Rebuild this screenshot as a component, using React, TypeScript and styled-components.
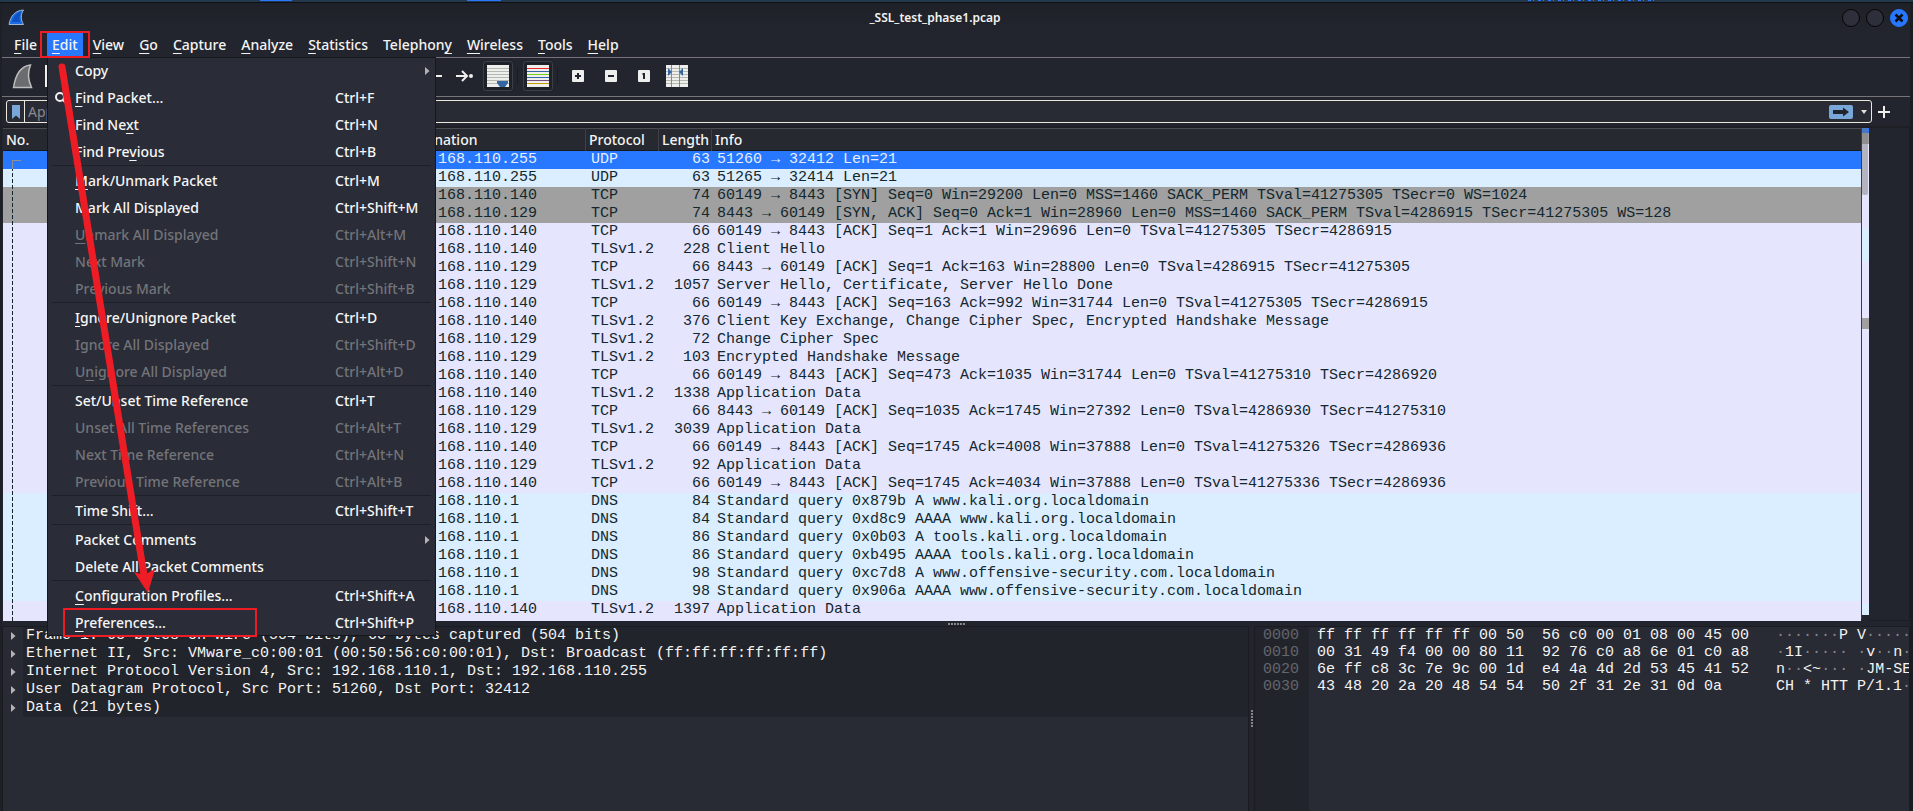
import React from 'react';
import styled, { createGlobalStyle, css } from 'styled-components';

const ui = '"Noto Sans", "Open Sans", sans-serif';
const mono = '"Liberation Mono", "DejaVu Sans Mono", monospace';

const GlobalStyle = createGlobalStyle`
  *, *::before, *::after { box-sizing: border-box; }
  body {
    margin: 0;
    background: #23252e;
    color: #f4f4f4;
    font: 500 14px/22px ${ui};
    overflow: hidden;
  }
  button {
    border: 0;
    padding: 0;
    background: none;
    color: inherit;
    font: inherit;
  }
`;

const Desktop = styled.div`
  display: flex;
  flex-direction: column;
  height: 100vh;
`;

const DesktopStrip = styled.div`
  position: relative;
  flex: none;
  height: 3px;
  background: #24394b;
  border-bottom: 1px solid #0f1015;
`;

const StripMark = styled.i<{ $left: string; $width: number }>`
  position: absolute;
  top: 0;
  left: ${(p) => p.$left};
  width: ${(p) => p.$width}px;
  height: 1px;
  background: #2777ff;
`;

const StripText = styled(StripMark)`
  background: repeating-linear-gradient(90deg, #2777ff 0 3px, transparent 3px 5px, #2777ff 5px 6px, transparent 6px 10px);
`;

const Window = styled.div`
  flex: 1;
  min-height: 0;
  display: flex;
  flex-direction: column;
  border-left: 2px solid #1e2027;
  border-right: 3px solid #1a1c22;
  background: #23252e;
`;

const TitleBar = styled.header`
  flex: none;
  display: flex;
  align-items: center;
  height: 29px;
  padding: 0 2px 0 6px;
  background: linear-gradient(#1f2128, #23252e);
`;

const Title = styled.h1`
  flex: 1;
  margin: 0;
  padding-left: 3px;
  text-align: center;
  font-size: 12px;
  font-weight: 600;
  line-height: 18px;
`;

const WindowButtons = styled.div`
  display: flex;
  gap: 6px;
`;

const WindowButton = styled.button<{ $close?: boolean }>`
  display: grid;
  place-items: center;
  width: 18px;
  height: 18px;
  border-radius: 50%;
  border: 1px solid ${(p) => (p.$close ? '#2777ff' : '#050506')};
  background: ${(p) => (p.$close ? '#2777ff' : '#2d303a')};
`;

const MenuBar = styled.nav`
  flex: none;
  display: flex;
  align-items: center;
  gap: 5px;
  height: 26px;
  padding-left: 7px;
  border-bottom: 1px solid #77737b;
`;

const MenuSlot = styled.div`
  position: relative;
`;

const MenuTitle = styled.button<{ $open?: boolean }>`
  display: block;
  height: 23px;
  padding: 0 5px;
  line-height: 23px;
  background: ${(p) => (p.$open ? '#2777ff' : 'transparent')};
`;

const Mnemonic = styled.span`
  text-decoration: underline;
  text-decoration-thickness: 1px;
  text-underline-offset: 3px;
`;

const EditFrame = styled.span`
  position: absolute;
  z-index: 4;
  inset: -2px -7px;
  border: 2px solid #ee1c25;
  pointer-events: none;
`;

const Dropdown = styled.div`
  position: absolute;
  z-index: 3;
  top: 24px;
  left: 0;
  width: 389px;
  background: #2a2c37;
  box-shadow: inset 0 0 0 1px #15171d;
`;

const MenuGroup = styled.div`
  & + &::before {
    content: '';
    display: block;
    height: 2px;
    margin: 0 5px;
    border-top: 1px solid #1e2028;
  }
`;

const MenuRow = styled.button<{ $off?: boolean }>`
  position: relative;
  display: grid;
  grid-template-columns: 28px 260px 1fr 10px;
  align-items: center;
  width: 100%;
  height: 27px;
  padding-right: 1px;
  text-align: left;
  color: ${(p) => (p.$off ? '#737479' : '#f6f6f6')};
`;

const RowIcon = styled.span`
  display: flex;
  padding-left: 8px;
`;

const Shortcut = styled.kbd`
  font: inherit;
`;

const PreferencesFrame = styled.span`
  position: absolute;
  top: -1px;
  left: 16px;
  width: 194px;
  height: 29px;
  border: 2px solid #ee1c25;
`;

const PointerArrow = styled.svg`
  position: absolute;
  top: 0;
  left: 0;
  pointer-events: none;
`;

const Toolbar = styled.div`
  flex: none;
  display: flex;
  align-items: center;
  height: 39px;
  padding: 0 0 2px 4px;
  border-bottom: 1px solid #77757a;
`;

const ToolButton = styled.button<{ $pressed?: boolean }>`
  flex: none;
  display: grid;
  place-items: center;
  width: ${(p) => (p.$pressed ? 30 : 33)}px;
  height: 30px;
  ${(p) =>
    p.$pressed &&
    css`
      border: 1px solid #3c3f46;
      border-radius: 3px;
      background: #1f2128;
    `}
`;

const ToolGap = styled.span<{ $size: number }>`
  flex: none;
  width: ${(p) => p.$size}px;
`;

const ToolDivider = styled.span`
  flex: none;
  width: 1px;
  height: 18px;
  margin: 0 5px 0 4px;
  background: #1b1d23;
  &:last-of-type {
    margin: 0 3px 0 4px;
  }
`;

const FilterBar = styled.form`
  flex: none;
  display: flex;
  align-items: center;
  height: 31px;
  padding: 0 19px 0 4px;
  gap: 6px;
  border-bottom: 2px solid #1d1f25;
`;

const FilterBox = styled.div`
  flex: 1;
  display: flex;
  align-items: center;
  height: 23px;
  border: 1px solid #ece8dd;
  border-radius: 3px;
  background: #282a34;
`;

const BookmarkButton = styled.button`
  display: grid;
  place-items: center;
  width: 18px;
  height: 21px;
  border-right: 1px solid #ece8dd;
`;

const FilterInput = styled.input`
  flex: 1;
  min-width: 0;
  height: 21px;
  padding: 0 3px;
  border: 0;
  background: none;
  color: #f4f4f4;
  font: 400 14px/21px ${ui};
  &::placeholder {
    color: #8a8b8f;
    opacity: 1;
  }
`;

const ApplyButton = styled.button`
  display: grid;
  place-items: center;
  width: 24px;
  height: 14px;
  margin-right: 8px;
  border-radius: 2px;
  background: #7aa7d9;
`;

const HistoryButton = styled.button`
  display: grid;
  place-items: center;
  width: 6px;
  height: 14px;
  margin-right: 4px;
`;

const AddButton = styled.button`
  display: grid;
  width: 13px;
`;

const ListPane = styled.section`
  flex: none;
  display: flex;
  padding-left: 1px;
`;

const TableWrap = styled.div`
  position: relative;
  flex: 1;
  min-width: 0;
  padding-bottom: 2px;
  background: #e5e5fe;
`;

const PacketTable = styled.table`
  width: 100%;
  table-layout: fixed;
  border-collapse: separate;
  border-spacing: 0;
  font: 400 15px/18px ${mono};
`;

const Col = styled.col<{ $w?: number }>`
  width: ${(p) => (p.$w ? `${p.$w}px` : 'auto')};
`;

const HeadCell = styled.th`
  height: 23px;
  padding: 0 0 0 3px;
  border-right: 1px solid #3d4047;
  background: linear-gradient(#4a4c52 0 1px, #262930 1px 22px, #17191e 22px);
  text-align: left;
  font: 500 14px/22px ${ui};
  &:last-child {
    border-right: 0;
  }
`;

type Tone = 'sel' | 'udp' | 'syn' | 'tcp';
const tones: Record<Tone, string> = { sel: '#2777ff', udp: '#daeeff', syn: '#a0a0a0', tcp: '#e5e5fe' };

const PacketRow = styled.tr<{ $tone: Tone }>`
  background: ${(p) => tones[p.$tone]};
  color: ${(p) => (p.$tone === 'sel' ? '#e6eefe' : '#12272e')};
`;

const Cell = styled.td<{ $right?: boolean }>`
  height: 18px;
  padding: 0 2px 0 5px;
  white-space: pre;
  overflow: hidden;
  text-align: ${(p) => (p.$right ? 'right' : 'left')};
`;

const StreamLine = styled.span`
  position: absolute;
  top: 32px;
  bottom: 0;
  left: 9px;
  width: 9px;
  border-top: 1px solid #8f9093;
  &::before {
    content: '';
    position: absolute;
    top: 0;
    bottom: 0;
    left: 0;
    width: 1px;
    background: linear-gradient(#8f9093 0 8px, transparent 8px),
      repeating-linear-gradient(#12272e 0 4px, transparent 4px 6px);
  }
`;

const MiniMap = styled.div`
  position: relative;
  flex: none;
  width: 8px;
  margin-bottom: 2px;
  border-left: 1px solid #3b3d44;
  background: linear-gradient(
    #2777ff 0 5px,
    #a0a0a0 5px 16px,
    #e5e5fe 16px 100px,
    #daeeff 100px 134px,
    #e5e5fe 134px 190px,
    #a0a0a0 190px 201px,
    #e5e5fe 201px 476px,
    #daeeff 476px 487px,
    #23252e 487px
  );
`;

const MiniThumb = styled.span`
  position: absolute;
  top: 0;
  left: 0;
  width: 6px;
  height: 67px;
  border-radius: 0 0 2px 2px;
  background: rgba(120, 120, 120, 0.45);
`;

const ListMargin = styled.div`
  flex: none;
  width: 41px;
  border-right: 1px solid #1c1e24;
  border-bottom: 1px solid #1c1e24;
`;

const Splitter = styled.div<{ $vertical?: boolean }>`
  flex: none;
  display: grid;
  place-items: center;
  height: ${(p) => (p.$vertical ? 'auto' : '5px')};
  &::after {
    content: '';
    width: ${(p) => (p.$vertical ? 2 : 17)}px;
    height: ${(p) => (p.$vertical ? 17 : 2)}px;
    background: repeating-linear-gradient(
      ${(p) => (p.$vertical ? '180deg' : '90deg')},
      #85868a 0 2px,
      transparent 2px 3px
    );
  }
`;

const LowerPanes = styled.section`
  flex: 1;
  min-height: 0;
  display: grid;
  grid-template-columns: minmax(0, 1fr) 5px 656px;
`;

const Details = styled.div`
  border: 1px solid #1a1c22;
  border-bottom: 0;
  background: #282a34;
  font: 400 15px/18px ${mono};
  overflow: hidden;
`;

const DetailList = styled.ul`
  margin: 0;
  padding: 0;
  list-style: none;
`;

const DetailRow = styled.li`
  display: grid;
  grid-template-columns: 20px 1fr;
  align-items: center;
  height: 18px;
  white-space: pre;
`;

const DetailMark = styled.span`
  display: flex;
  align-items: center;
  height: 18px;
  padding-left: 8px;
`;

const DetailText = styled.span`
  height: 18px;
  padding-left: 3px;
  background: #22242c;
`;

const HexPane = styled.div`
  display: grid;
  grid-template-columns: 54px minmax(0, 1fr);
  border: 1px solid #1a1c22;
  border-bottom: 0;
  background: #282a34;
  font: 400 15px/17px ${mono};
  overflow: hidden;
`;

const Offsets = styled.pre`
  margin: 0;
  padding: 0 0 0 8px;
  font: inherit;
  background: #22242c;
  color: #65666b;
`;

const Bytes = styled.pre`
  margin: 0;
  padding-left: 8px;
  font: inherit;
  overflow: hidden;
`;

const Dots = styled.span`
  color: #85868a;
`;

const underline = (label: string) => {
  const at = label.indexOf('_');
  if (at < 0) return label;
  return (
    <>
      {label.slice(0, at)}
      <Mnemonic>{label[at + 1]}</Mnemonic>
      {label.slice(at + 2)}
    </>
  );
};

type Entry = { label: string; keys?: string; off?: boolean; sub?: boolean; find?: boolean; marked?: boolean };

const editMenu: Entry[][] = [
  [
    { label: 'Copy', sub: true },
    { label: '_Find Packet…', keys: 'Ctrl+F', find: true },
    { label: 'Find Ne_xt', keys: 'Ctrl+N' },
    { label: 'Find Pre_vious', keys: 'Ctrl+B' },
  ],
  [
    { label: '_Mark/Unmark Packet', keys: 'Ctrl+M' },
    { label: 'Mark All Displayed', keys: 'Ctrl+Shift+M' },
    { label: '_Unmark All Displayed', keys: 'Ctrl+Alt+M', off: true },
    { label: 'Next Mark', keys: 'Ctrl+Shift+N', off: true },
    { label: 'Previous Mark', keys: 'Ctrl+Shift+B', off: true },
  ],
  [
    { label: '_Ignore/Unignore Packet', keys: 'Ctrl+D' },
    { label: 'Ignore All Displayed', keys: 'Ctrl+Shift+D', off: true },
    { label: 'U_nignore All Displayed', keys: 'Ctrl+Alt+D', off: true },
  ],
  [
    { label: 'Set/Unset Time Reference', keys: 'Ctrl+T' },
    { label: 'Unset All Time References', keys: 'Ctrl+Alt+T', off: true },
    { label: 'Next Time Reference', keys: 'Ctrl+Alt+N', off: true },
    { label: 'Previous Time Reference', keys: 'Ctrl+Alt+B', off: true },
  ],
  [{ label: 'Time Shift…', keys: 'Ctrl+Shift+T' }],
  [{ label: 'Packet Comments', sub: true }, { label: 'Delete All Packet Comments' }],
  [
    { label: '_Configuration Profiles…', keys: 'Ctrl+Shift+A' },
    { label: '_Preferences…', keys: 'Ctrl+Shift+P', marked: true },
  ],
];

const menus = ['_File', '_Edit', '_View', '_Go', '_Capture', '_Analyze', '_Statistics', 'Telephon_y', '_Wireless', '_Tools', '_Help'];

type Packet = [Tone, string, string, number, string];

const packets: Packet[] = [
  ['sel', '255', 'UDP', 63, '51260 → 32412 Len=21'],
  ['udp', '255', 'UDP', 63, '51265 → 32414 Len=21'],
  ['syn', '140', 'TCP', 74, '60149 → 8443 [SYN] Seq=0 Win=29200 Len=0 MSS=1460 SACK_PERM TSval=41275305 TSecr=0 WS=1024'],
  ['syn', '129', 'TCP', 74, '8443 → 60149 [SYN, ACK] Seq=0 Ack=1 Win=28960 Len=0 MSS=1460 SACK_PERM TSval=4286915 TSecr=41275305 WS=128'],
  ['tcp', '140', 'TCP', 66, '60149 → 8443 [ACK] Seq=1 Ack=1 Win=29696 Len=0 TSval=41275305 TSecr=4286915'],
  ['tcp', '140', 'TLSv1.2', 228, 'Client Hello'],
  ['tcp', '129', 'TCP', 66, '8443 → 60149 [ACK] Seq=1 Ack=163 Win=28800 Len=0 TSval=4286915 TSecr=41275305'],
  ['tcp', '129', 'TLSv1.2', 1057, 'Server Hello, Certificate, Server Hello Done'],
  ['tcp', '140', 'TCP', 66, '60149 → 8443 [ACK] Seq=163 Ack=992 Win=31744 Len=0 TSval=41275305 TSecr=4286915'],
  ['tcp', '140', 'TLSv1.2', 376, 'Client Key Exchange, Change Cipher Spec, Encrypted Handshake Message'],
  ['tcp', '129', 'TLSv1.2', 72, 'Change Cipher Spec'],
  ['tcp', '129', 'TLSv1.2', 103, 'Encrypted Handshake Message'],
  ['tcp', '140', 'TCP', 66, '60149 → 8443 [ACK] Seq=473 Ack=1035 Win=31744 Len=0 TSval=41275310 TSecr=4286920'],
  ['tcp', '140', 'TLSv1.2', 1338, 'Application Data'],
  ['tcp', '129', 'TCP', 66, '8443 → 60149 [ACK] Seq=1035 Ack=1745 Win=27392 Len=0 TSval=4286930 TSecr=41275310'],
  ['tcp', '129', 'TLSv1.2', 3039, 'Application Data'],
  ['tcp', '140', 'TCP', 66, '60149 → 8443 [ACK] Seq=1745 Ack=4008 Win=37888 Len=0 TSval=41275326 TSecr=4286936'],
  ['tcp', '129', 'TLSv1.2', 92, 'Application Data'],
  ['tcp', '140', 'TCP', 66, '60149 → 8443 [ACK] Seq=1745 Ack=4034 Win=37888 Len=0 TSval=41275336 TSecr=4286936'],
  ['udp', '1', 'DNS', 84, 'Standard query 0x879b A www.kali.org.localdomain'],
  ['udp', '1', 'DNS', 84, 'Standard query 0xd8c9 AAAA www.kali.org.localdomain'],
  ['udp', '1', 'DNS', 86, 'Standard query 0x0b03 A tools.kali.org.localdomain'],
  ['udp', '1', 'DNS', 86, 'Standard query 0xb495 AAAA tools.kali.org.localdomain'],
  ['udp', '1', 'DNS', 98, 'Standard query 0xc7d8 A www.offensive-security.com.localdomain'],
  ['udp', '1', 'DNS', 98, 'Standard query 0x906a AAAA www.offensive-security.com.localdomain'],
  ['tcp', '140', 'TLSv1.2', 1397, 'Application Data'],
];

const details = [
  'Frame 1: 63 bytes on wire (504 bits), 63 bytes captured (504 bits)',
  'Ethernet II, Src: VMware_c0:00:01 (00:50:56:c0:00:01), Dst: Broadcast (ff:ff:ff:ff:ff:ff)',
  'Internet Protocol Version 4, Src: 192.168.110.1, Dst: 192.168.110.255',
  'User Datagram Protocol, Src Port: 51260, Dst Port: 32412',
  'Data (21 bytes)',
];

const dump: [string, string][] = [
  ['ff ff ff ff ff ff 00 50  56 c0 00 01 08 00 45 00', '·······P V·····E·'],
  ['00 31 49 f4 00 00 80 11  92 76 c0 a8 6e 01 c0 a8', '·1I····· ·v··n···'],
  ['6e ff c8 3c 7e 9c 00 1d  e4 4a 4d 2d 53 45 41 52', 'n··<~··· ·JM-SEAR'],
  ['43 48 20 2a 20 48 54 54  50 2f 31 2e 31 0d 0a', 'CH * HTT P/1.1··'],
];

const dimDots = (text: string) =>
  text.split(/(·+)/).map((part, i) => (part.startsWith('·') ? <Dots key={i}>{part}</Dots> : part));

const AppIcon = () => (
  <svg width="17" height="17" viewBox="0 0 17 17">
    <path d="M1 15.5C2.500 7 7 1.500 15.500 1C12.500 5.500 12.500 10.500 15.500 15.500Z" fill="#1c6be0" stroke="#9db6d8" />
    <path d="M4 13C6 7 9 3.500 13.500 2.500C11 6 11 10 12 13Z" fill="#0d52c4" />
  </svg>
);

const FinIcon = () => (
  <svg width="24" height="26" viewBox="0 0 24 26">
    <path d="M2.500 24.500C4.500 12 9 3 19.500 2C16.500 9 17 17 20.500 24.500Z" fill="#6a6c70" stroke="#bdbec0" strokeWidth="1.500" />
  </svg>
);

const SheetIcon = ({ colors, children }: { colors: string[]; children?: React.ReactNode }) => (
  <svg width="22" height="22" viewBox="0 0 22 22" shapeRendering="crispEdges">
    <rect width="22" height="22" fill="#eeeeec" />
    {colors.map((c, i) => (
      <rect key={i} y={i * 3 + 3} width="22" height="1" fill={c} />
    ))}
    {children}
  </svg>
);

const greys = Array(6).fill('#b5b8b1');

const ZoomGlyph = ({ d }: { d: string }) => (
  <svg width="12" height="12" viewBox="0 0 12 12">
    <rect width="12" height="12" rx="1" fill="#eeeeec" />
    <path d={d} stroke="#23252e" strokeWidth="2" fill="none" />
  </svg>
);

const Triangle = () => (
  <svg width="5" height="8" viewBox="0 0 5 8">
    <path d="M0 0L4.500 4L0 8Z" fill="#b4b4b6" />
  </svg>
);

export default function App() {
  return (
    <Desktop>
      <GlobalStyle />
      <DesktopStrip>
        <StripMark $left="13.6%" $width={32} />
        <StripMark $left="24.4%" $width={34} />
        <StripText $left="79.9%" $width={126} />
      </DesktopStrip>
      <Window>
        <TitleBar>
          <AppIcon />
          <Title>_SSL_test_phase1.pcap</Title>
          <WindowButtons>
            <WindowButton aria-label="Minimize" />
            <WindowButton aria-label="Maximize" />
            <WindowButton $close aria-label="Close">
              <svg width="10" height="10" viewBox="0 0 10 10">
                <path d="M1.500 1.500L8.500 8.500M8.500 1.500L1.500 8.500" stroke="#0a0d16" strokeWidth="2.600" />
              </svg>
            </WindowButton>
          </WindowButtons>
        </TitleBar>

        <MenuBar>
          {menus.map((name) =>
            name === '_Edit' ? (
              <MenuSlot key={name}>
                <MenuTitle $open>{underline(name)}</MenuTitle>
                <EditFrame />
                <Dropdown>
                  {editMenu.map((group, g) => (
                    <MenuGroup key={g}>
                      {group.map((e) => (
                        <MenuRow key={e.label} $off={e.off} disabled={e.off}>
                          <RowIcon>
                            {e.find && (
                              <svg width="12" height="12" viewBox="0 0 12 12" fill="none" stroke="#f0f0f0" strokeWidth="2">
                                <circle cx="5" cy="5" r="4" />
                                <path d="M8 8L11.500 11.500" />
                              </svg>
                            )}
                          </RowIcon>
                          <span>{underline(e.label)}</span>
                          <Shortcut>{e.keys}</Shortcut>
                          {e.sub && <Triangle />}
                          {e.marked && <PreferencesFrame />}
                        </MenuRow>
                      ))}
                    </MenuGroup>
                  ))}
                  <PointerArrow width="120" height="560" viewBox="0 0 120 560">
                    <path d="M15 10L97 518" stroke="#ee1c25" strokeWidth="7" strokeLinecap="round" />
                    <path d="M87 515L97 518L108 512L101 536Z" fill="#ee1c25" />
                  </PointerArrow>
                </Dropdown>
              </MenuSlot>
            ) : (
              <MenuTitle key={name}>{underline(name)}</MenuTitle>
            ),
          )}
        </MenuBar>

        <Toolbar>
          <ToolButton aria-label="Start capture">
            <FinIcon />
          </ToolButton>
          <ToolButton aria-label="Stop capture">
            <svg width="24" height="24" viewBox="0 0 24 24">
              <rect x="1" y="1" width="22" height="22" fill="#eeeeec" />
            </svg>
          </ToolButton>
          <ToolGap $size={343} />
          <ToolButton aria-label="First packet">
            <svg width="24" height="14" viewBox="0 0 24 14">
              <path d="M10 7H22" stroke="#eeeeec" strokeWidth="2" />
            </svg>
          </ToolButton>
          <ToolButton aria-label="Last packet">
            <svg width="18" height="14" viewBox="0 0 18 14" fill="none" stroke="#eeeeec" strokeWidth="2">
              <path d="M0 7H10M6 2L11 7L6 12" />
              <circle cx="15" cy="7" r="2" fill="#eeeeec" stroke="none" />
            </svg>
          </ToolButton>
          <ToolGap $size={2} />
          <ToolButton $pressed aria-label="Auto scroll">
            <SheetIcon colors={greys}>
              <path d="M10 16H21V18L18 22H13L10 18Z" fill="#3465a4" shapeRendering="auto" />
            </SheetIcon>
          </ToolButton>
          <ToolDivider />
          <ToolButton $pressed aria-label="Colorize packets">
            <SheetIcon colors={['#ef2929', '#3465a4', '#73d216', '#3465a4', '#75507b', '#c4a000']} />
          </ToolButton>
          <ToolDivider />
          <ToolButton aria-label="Zoom in">
            <ZoomGlyph d="M6 3V9M3 6H9" />
          </ToolButton>
          <ToolButton aria-label="Zoom out">
            <ZoomGlyph d="M3 6H9" />
          </ToolButton>
          <ToolButton aria-label="Normal size">
            <ZoomGlyph d="M4.500 4H6V9" />
          </ToolButton>
          <ToolButton aria-label="Resize columns">
            <SheetIcon colors={greys}>
              <path d="M5.500 0V22M13.500 0V22" stroke="#888a85" />
              <path d="M2 3L6 7L2 11ZM17 3L13 7L17 11Z" fill="#3465a4" shapeRendering="auto" />
            </SheetIcon>
          </ToolButton>
        </Toolbar>

        <FilterBar onSubmit={(e) => e.preventDefault()}>
          <FilterBox>
            <BookmarkButton type="button" aria-label="Saved filters">
              <svg width="8" height="14" viewBox="0 0 8 14">
                <path d="M0 0H8V14L4 10.500L0 14Z" fill="#7aa7d9" />
              </svg>
            </BookmarkButton>
            <FilterInput aria-label="Display filter" placeholder="Apply a display filter" />
            <ApplyButton type="submit" aria-label="Apply filter">
              <svg width="16" height="10" viewBox="0 0 16 10">
                <path d="M0 3H10V0.500L16 5L10 9.500V7H0Z" fill="#23252e" />
              </svg>
            </ApplyButton>
            <HistoryButton type="button" aria-label="Filter history">
              <svg width="6" height="4" viewBox="0 0 6 4">
                <path d="M0 0H6L3 4Z" fill="#e0e0dc" />
              </svg>
            </HistoryButton>
          </FilterBox>
          <AddButton type="button" aria-label="Add filter button">
            <svg width="12" height="12" viewBox="0 0 12 12">
              <path d="M6 0V12M0 6H12" stroke="#eeeeec" strokeWidth="2" />
            </svg>
          </AddButton>
        </FilterBar>

        <ListPane>
          <TableWrap>
            <PacketTable>
              <colgroup>
                <Col $w={394} />
                <Col $w={189} />
                <Col $w={73} />
                <Col $w={53} />
                <Col />
              </colgroup>
              <thead>
                <tr>
                  <HeadCell>No.</HeadCell>
                  <HeadCell>Destination</HeadCell>
                  <HeadCell>Protocol</HeadCell>
                  <HeadCell>Length</HeadCell>
                  <HeadCell>Info</HeadCell>
                </tr>
              </thead>
              <tbody>
                {packets.map(([tone, host, protocol, length, info], i) => (
                  <PacketRow key={i} $tone={tone}>
                    <Cell />
                    <Cell>192.168.110.{host}</Cell>
                    <Cell>{protocol}</Cell>
                    <Cell $right>{length}</Cell>
                    <Cell>{info}</Cell>
                  </PacketRow>
                ))}
              </tbody>
            </PacketTable>
            <StreamLine />
          </TableWrap>
          <MiniMap>
            <MiniThumb />
          </MiniMap>
          <ListMargin />
        </ListPane>

        <Splitter />

        <LowerPanes>
          <Details>
            <DetailList>
              {details.map((line) => (
                <DetailRow key={line}>
                  <DetailMark>
                    <Triangle />
                  </DetailMark>
                  <DetailText>{line}</DetailText>
                </DetailRow>
              ))}
            </DetailList>
          </Details>
          <Splitter $vertical />
          <HexPane>
            <Offsets>{'0000\n0010\n0020\n0030'}</Offsets>
            <Bytes>
              {dump.map(([bytes, ascii], i) => (
                <React.Fragment key={i}>
                  {bytes.padEnd(51)}
                  {dimDots(ascii)}
                  {'\n'}
                </React.Fragment>
              ))}
            </Bytes>
          </HexPane>
        </LowerPanes>
      </Window>
    </Desktop>
  );
}
